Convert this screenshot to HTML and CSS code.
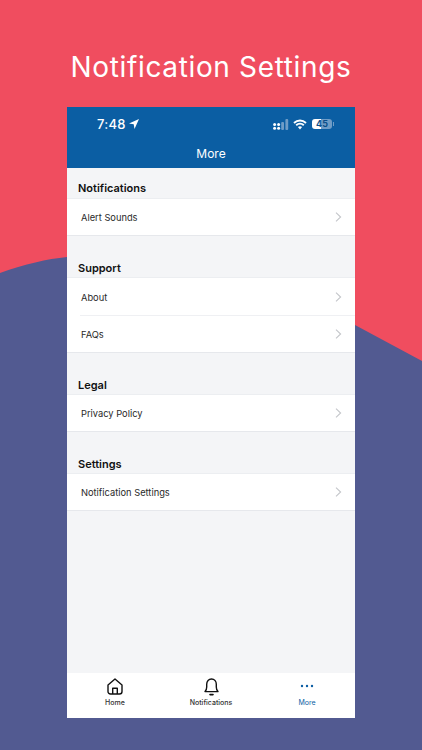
FILE: index.html
```html
<!DOCTYPE html>
<html>
<head>
    <meta name="viewport" content="width=device-width, initial-scale=1">
    <title>Notification Settings</title>
    <link rel="stylesheet" href="styles.css">
</head>
<body>
    <!-- Background wave -->
    <svg class="wave" width="422" height="750" viewBox="0 0 422 750">
        <path d="M0 273 C25 264 47 259 67 257 C150 250 260 270 355 325 L422 361 L422 750 L0 750 Z" fill="#525a91"/>
    </svg>

    <h1 class="headline">Notification Settings</h1>

    <div class="phone">
        <div class="top-bar">
            <div class="status-bar">
                <div class="status-left">
                    <span class="clock">7:48</span>
                    <svg width="10" height="10" viewBox="0 0 10 10"><path d="M10 0 L0 4.4 L4.7 5.2 L5.5 10 Z" fill="#fff"/></svg>
                </div>
                <div class="status-right">
                    <svg width="16" height="11" viewBox="0 0 16 11">
                        <g fill="#fff">
                            <circle cx="1.6" cy="9.2" r="1.5"/><circle cx="5.6" cy="9.2" r="1.5"/>
                            <circle cx="1.6" cy="5.4" r="1.5"/><circle cx="5.6" cy="5.4" r="1.5"/>
                        </g>
                        <g fill="#6f9cc6">
                            <rect x="8.2" y="3" width="2.8" height="8" rx="1"/>
                            <rect x="12.4" y="0" width="2.8" height="11" rx="1"/>
                        </g>
                    </svg>
                    <svg width="14" height="11" viewBox="0 0 14 11">
                        <path d="M1 4 C4.5 0.6 9.5 0.6 13 4 M3.2 6.2 C5.4 4.2 8.6 4.2 10.8 6.2" fill="none" stroke="#fff" stroke-width="1.9"/>
                        <path d="M7 10.5 L4.9 8.1 C6.1 7.1 7.9 7.1 9.1 8.1 Z" fill="#fff"/>
                    </svg>
                    <div class="battery"><span class="battery-text">45</span></div>
                    <span class="battery-tip"></span>
                </div>
            </div>
            <div class="nav-title">More</div>
        </div>

        <div class="content">
            <div class="section-title">Notifications</div>
            <div class="group">
                <div class="row"><span>Alert Sounds</span><svg class="chevron" width="7" height="10" viewBox="0 0 7 10"><path d="M1 .6 L5.6 5 L1 9.4" /></svg></div>
            </div>

            <div class="section-title">Support</div>
            <div class="group">
                <div class="row row-line"><span>About</span><svg class="chevron" width="7" height="10" viewBox="0 0 7 10"><path d="M1 .6 L5.6 5 L1 9.4" /></svg></div>
                <div class="row"><span>FAQs</span><svg class="chevron" width="7" height="10" viewBox="0 0 7 10"><path d="M1 .6 L5.6 5 L1 9.4" /></svg></div>
            </div>

            <div class="section-title">Legal</div>
            <div class="group">
                <div class="row"><span>Privacy Policy</span><svg class="chevron" width="7" height="10" viewBox="0 0 7 10"><path d="M1 .6 L5.6 5 L1 9.4" /></svg></div>
            </div>

            <div class="section-title">Settings</div>
            <div class="group">
                <div class="row"><span>Notification Settings</span><svg class="chevron" width="7" height="10" viewBox="0 0 7 10"><path d="M1 .6 L5.6 5 L1 9.4" /></svg></div>
            </div>
        </div>

        <div class="tabs">
            <div class="tab">
                <svg width="16" height="17" viewBox="0 0 16 17" fill="none" stroke="#111" stroke-width="1.4" stroke-linejoin="round">
                    <path d="M1 7 L8 1 L15 7 V13.5 C15 15 14 16 12.5 16 H3.5 C2 16 1 15 1 13.5 Z"/>
                    <path d="M5.7 16 V10.2 H10.3 V16"/>
                </svg>
                <span class="tab-label">Home</span>
            </div>
            <div class="tab">
                <svg class="bell" width="15" height="18" viewBox="0 0 15 18" fill="none" stroke="#111" stroke-width="1.4" stroke-linejoin="round" stroke-linecap="round">
                    <path d="M1 13.6 C2.4 12.4 2.7 11 2.7 9 V6.2 C2.7 3.2 4.7 1 7.5 1 C10.3 1 12.3 3.2 12.3 6.2 V9 C12.3 11 12.6 12.4 14 13.6 Z"/>
                    <path d="M6 16.6 H9" stroke-width="1.6"/>
                </svg>
                <span class="tab-label">Notifications</span>
            </div>
            <div class="tab tab-active">
                <svg width="14" height="17" viewBox="0 0 14 17" fill="#0b5ea3">
                    <circle cx="2" cy="8" r="1.2"/><circle cx="7" cy="8" r="1.2"/><circle cx="12" cy="8" r="1.2"/>
                </svg>
                <span class="tab-label">More</span>
            </div>
        </div>
    </div>
</body>
</html>
```

FILE: styles.css
```css
/* Page and background */
* {
    box-sizing: border-box;
}

body {
    margin: 0;
    width: 422px;
    height: 750px;
    overflow: hidden;
    position: relative;
    background-color: #f04d5f;
    font-family: "Inter", "Liberation Sans", sans-serif;
    display: flex;
    flex-direction: column;
    align-items: center;
}

.wave {
    position: absolute;
    left: 0;
    top: 0;
}

.headline {
    position: relative;
    margin: 0;
    height: 107px;
    padding-top: 49px;
    font-size: 28px;
    line-height: 36px;
    font-weight: 400;
    letter-spacing: 0.65px;
    color: #fff;
}

/* Phone screen */
.phone {
    position: relative;
    width: 288px;
    height: 611px;
    display: flex;
    flex-direction: column;
    background-color: #f4f5f7;
}

.top-bar {
    height: 61px;
    background-color: #0b5ea3;
    color: #fff;
}

.status-bar {
    height: 25px;
    padding: 0 21px 0 30px;
    display: flex;
    justify-content: space-between;
    align-items: flex-end;
}

.status-left {
    display: flex;
    align-items: center;
    gap: 3px;
}

.clock {
    font-size: 13px;
    line-height: 16px;
    font-weight: 500;
    letter-spacing: 0.3px;
}

.status-right {
    display: flex;
    align-items: center;
    height: 16px;
    gap: 4px;
}

.battery {
    width: 20px;
    height: 10px;
    margin-left: 1px;
    border-radius: 3px;
    background: linear-gradient(to right, #fff 45%, #6f9cc6 45%);
    display: flex;
    align-items: center;
    justify-content: center;
}

.battery-text {
    font-size: 9px;
    line-height: 10px;
    font-weight: 700;
    color: #0b4f8a;
}

.battery-tip {
    width: 1px;
    height: 4px;
    margin-left: -3px;
    background-color: #6f9cc6;
}

.nav-title {
    margin-top: 13px;
    font-size: 12px;
    line-height: 18px;
    font-weight: 400;
    text-align: center;
}

/* Settings list */
.content {
    flex: 1;
}

.section-title {
    height: 31px;
    padding: 14px 0 0 11px;
    font-size: 11px;
    line-height: 15px;
    font-weight: 600;
    color: #111;
}

.section-title:first-child {
    padding-top: 13px;
}

.group {
    margin-bottom: 11px;
    background-color: #fff;
    border-top: 1px solid #eceef1;
    border-bottom: 1px solid #e6e8ec;
}

.section-title + .group {
    margin-top: -1px;
}

.row {
    height: 36px;
    padding: 1px 13px 0 14px;
    display: flex;
    align-items: center;
    justify-content: space-between;
    font-size: 9.3px;
    color: #2a2a2a;
}

.row-line {
    height: 38px;
    position: relative;
}

.row-line::after {
    content: "";
    position: absolute;
    left: 13px;
    right: 0;
    bottom: 0;
    height: 1px;
    background-color: #eff0f3;
}

.chevron {
    margin-top: -2px;
    fill: none;
    stroke: #c4c6ca;
    stroke-width: 1.1;
}

/* Bottom tabs */
.tabs {
    height: 45px;
    display: flex;
    background-color: #fff;
}

.tab {
    flex: 1;
    padding-top: 5px;
    display: flex;
    flex-direction: column;
    align-items: center;
}

.bell {
    margin-bottom: -1px;
}

.tab-label {
    margin-top: 3px;
    font-size: 7px;
    line-height: 9px;
    font-weight: 500;
    color: #333;
}

.tab-active .tab-label {
    color: #0b5ea3;
    font-weight: 400;
}
```
